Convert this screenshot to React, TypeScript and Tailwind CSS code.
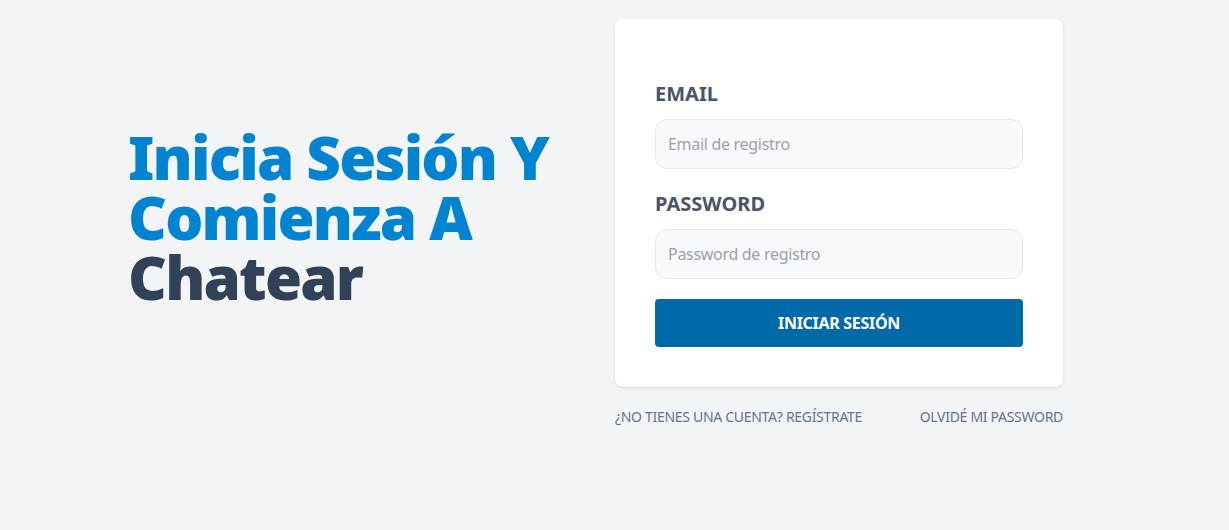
export default function App() {
  return (
    <div
      className="min-h-screen bg-gray-100"
      style={{ fontFamily: '"Noto Sans", "Open Sans", sans-serif' }}
    >
      <main className="flex items-center pl-[128px] pt-[19px]">
        {/* Heading */}
        <div className="w-[487px] pb-[32px]">
          <h1 className="text-sky-600 font-black text-6xl leading-[60px] tracking-[-1.8px] capitalize">
            Inicia Sesión y Comienza a{" "}
            <span className="text-slate-700">Chatear</span>
          </h1>
        </div>

        {/* Form */}
        <div className="w-[448px]">
          <form className="bg-white shadow rounded-lg px-10 py-10">
            <div className="my-5">
              <label className="uppercase text-gray-600 block text-xl font-bold pt-[2px] leading-[26px]" htmlFor="email">
                Email
              </label>
              <input
                id="email"
                type="email"
                placeholder="Email de registro"
                className="w-full mt-3 p-3 border border-gray-200 rounded-xl bg-gray-50 tracking-[-0.3px] placeholder:text-gray-400 outline-none"
              />
            </div>
            <div className="my-5">
              <label className="uppercase text-gray-600 block text-xl font-bold pt-[2px] leading-[26px]" htmlFor="password">
                Password
              </label>
              <input
                id="password"
                type="password"
                placeholder="Password de registro"
                className="w-full mt-3 p-3 border border-gray-200 rounded-xl bg-gray-50 tracking-[-0.3px] placeholder:text-gray-400 outline-none"
              />
            </div>
            <button
              type="submit"
              className="bg-sky-700 w-full py-3 text-white uppercase font-bold rounded tracking-[-0.3px]"
            >
              Iniciar Sesión
            </button>
          </form>

          <nav className="flex justify-between">
            <a className="block my-5 text-slate-500 uppercase text-sm tracking-[-0.3px]" href="#">
              ¿No tienes una cuenta? Regístrate
            </a>
            <a className="block my-5 text-slate-500 uppercase text-sm tracking-[-0.3px]" href="#">
              Olvidé mi password
            </a>
          </nav>
        </div>
      </main>
    </div>
  );
}
